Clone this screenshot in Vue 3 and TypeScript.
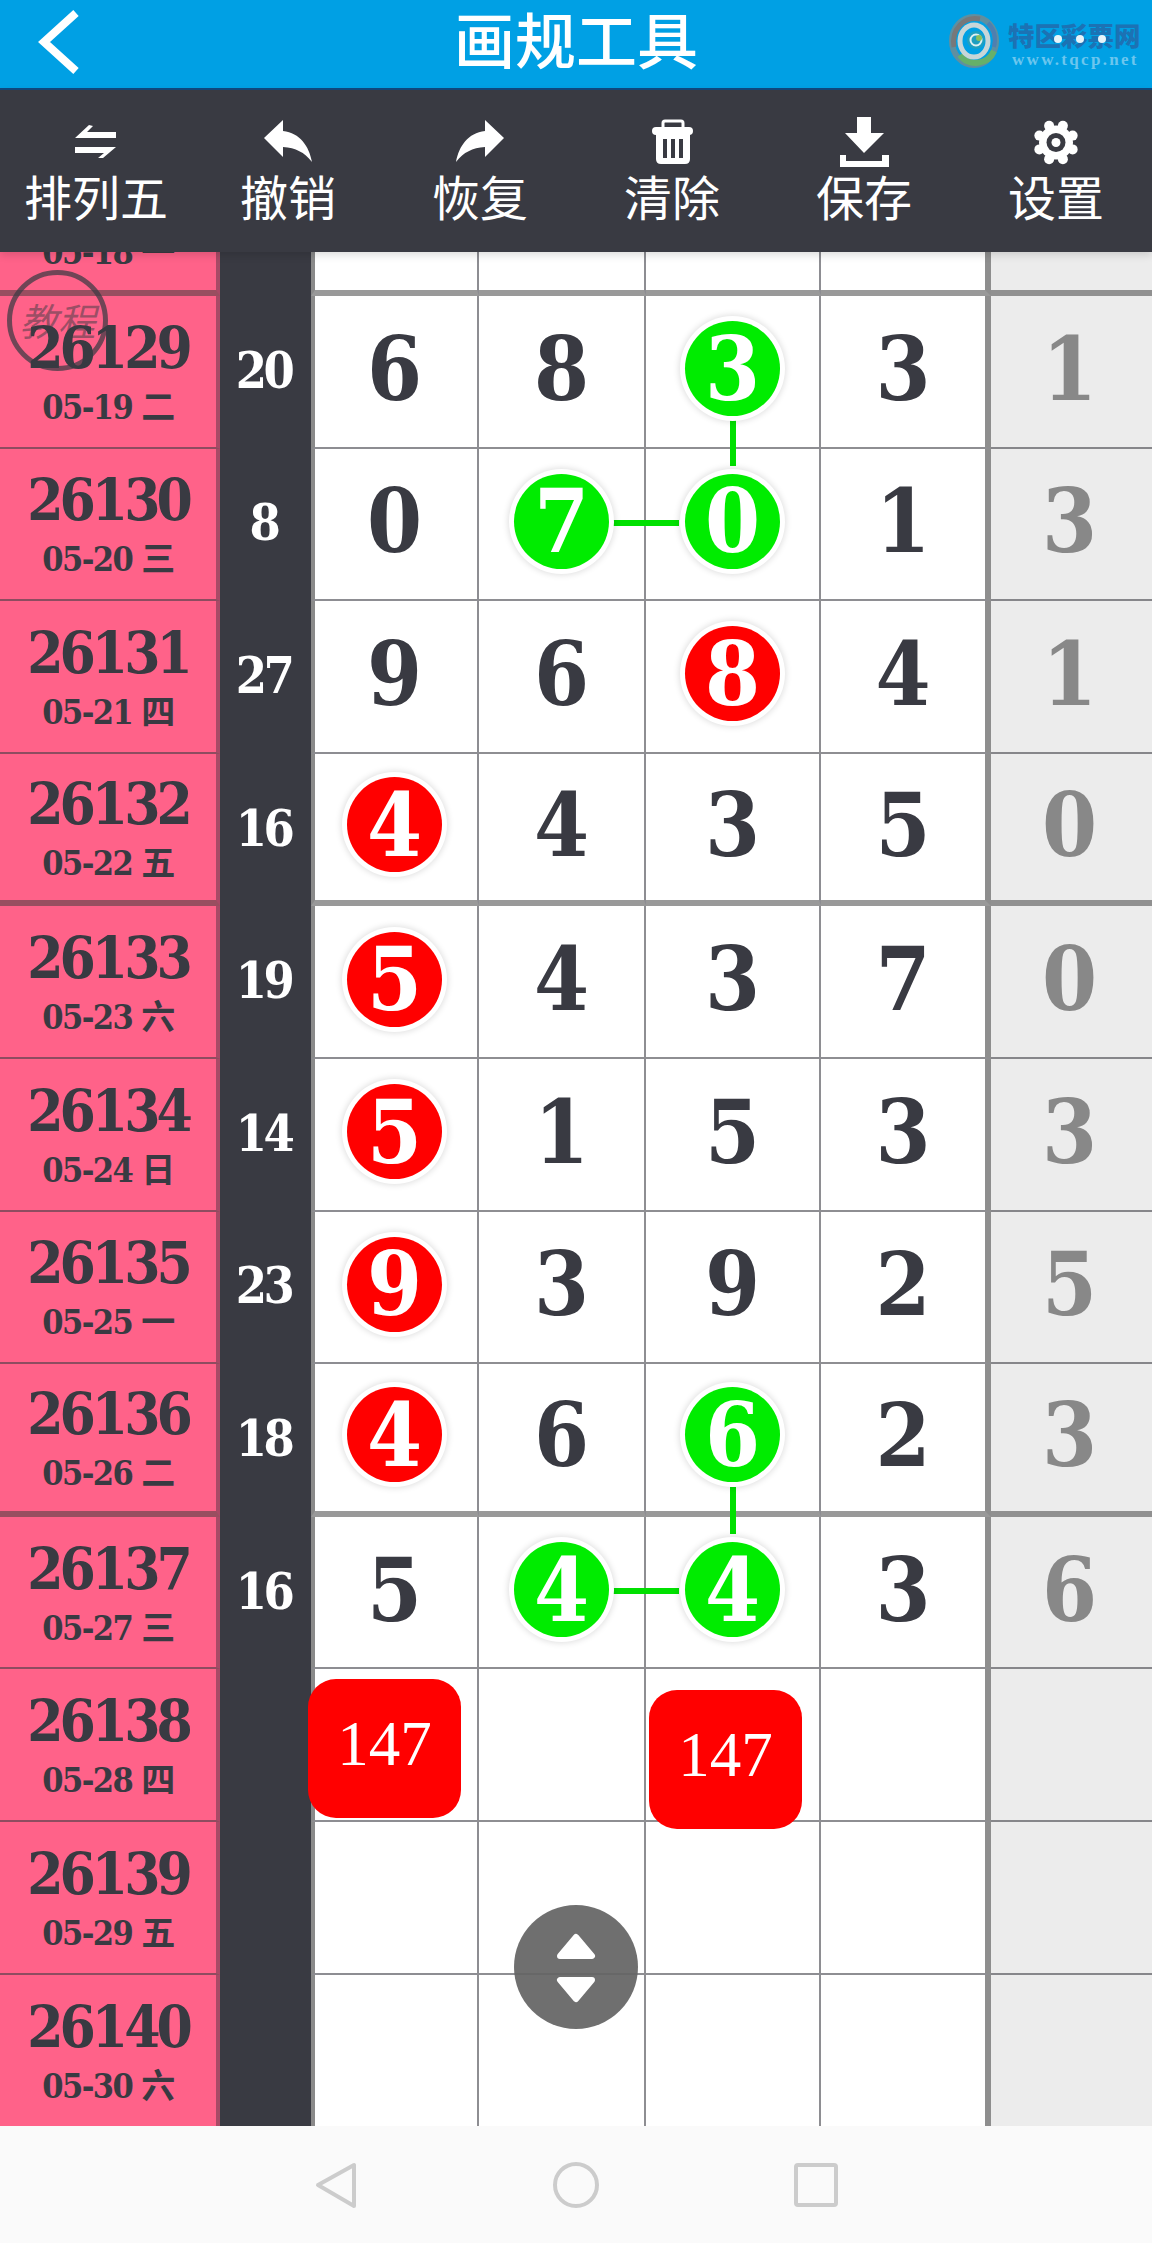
<script setup lang="ts">
type Ball = 'green' | 'red'

interface Cell {
  n: string
  ball?: Ball
  link?: boolean
}

interface Row {
  issue: number
  date: string
  sum: string
  cells: Cell[]
  tail: string
  thick: boolean
  last: boolean
}

const tools = ['排列五', '撤销', '恢复', '清除', '保存', '设置']

const gearTeeth = Array.from({ length: 8 }, (_, i) => {
  const a = (i * Math.PI) / 4 + Math.PI / 8
  return { x: 32 + 18 * Math.cos(a), y: 26.5 + 18 * Math.sin(a) }
})

// g = green ball, r = red ball, l = green ball joined to the ones above and left
function parseCells(src: string): Cell[] {
  if (!src) return [{ n: '' }, { n: '' }, { n: '' }, { n: '' }]
  return src.split(' ').map((s) => {
    const mark = s[1]
    return {
      n: s[0],
      ball: mark === 'r' ? 'red' : mark ? 'green' : undefined,
      link: mark === 'l',
    }
  })
}

const source: [string, string, string, string][] = [
  ['05-18 一', '', '', ''],
  ['05-19 二', '20', '6 8 3g 3', '1'],
  ['05-20 三', '8', '0 7g 0l 1', '3'],
  ['05-21 四', '27', '9 6 8r 4', '1'],
  ['05-22 五', '16', '4r 4 3 5', '0'],
  ['05-23 六', '19', '5r 4 3 7', '0'],
  ['05-24 日', '14', '5r 1 5 3', '3'],
  ['05-25 一', '23', '9r 3 9 2', '5'],
  ['05-26 二', '18', '4r 6 6g 2', '3'],
  ['05-27 三', '16', '5 4g 4l 3', '6'],
  ['05-28 四', '', '', ''],
  ['05-29 五', '', '', ''],
  ['05-30 六', '', '', ''],
]

const rows: Row[] = source.map(([date, sum, cells, tail], i) => ({
  issue: 26128 + i,
  date,
  sum,
  cells: parseCells(cells),
  tail,
  thick: i % 4 === 0 && i < 12,
  last: i === 12,
}))
</script>

<template>
  <div class="app">
    <header class="topbar">
      <svg class="back" width="90" height="80" viewBox="0 0 90 80">
        <polyline points="76,9 44,38 76,67" fill="none" stroke="#fff" stroke-width="8" />
      </svg>
      <h1 class="title">画规工具</h1>
      <div class="logo">
        <svg class="swirl" width="52" height="56" viewBox="0 0 52 56" fill="none">
          <ellipse cx="26" cy="28" rx="22" ry="24" stroke="#5f8fa0" stroke-width="6" />
          <path d="M6 34C3 16 16 3 32 6" stroke="#77787a" stroke-width="5" />
          <path d="M46 38C40 52 20 54 12 42" stroke="#66b06a" stroke-width="6" />
          <path d="M40 10C48 18 48 26 46 34" stroke="#4f7fb0" stroke-width="4" />
          <ellipse cx="26" cy="28" rx="14" ry="16" stroke="#c7d6d8" stroke-width="5" />
          <circle cx="28" cy="27" r="9" fill="#1f9fc0" />
          <circle cx="28" cy="27" r="5.5" stroke="#dff0f0" stroke-width="2" />
          <circle cx="31" cy="25" r="3" fill="#8bbf5a" />
        </svg>
        <div class="logo-text">
          <span class="logo-name">特区彩票网</span>
          <span class="logo-dots"><i /><i /><i /></span>
          <span class="logo-url">www.tqcp.net</span>
        </div>
      </div>
    </header>

    <nav class="toolbar">
      <div v-for="(label, i) in tools" :key="label" class="tool">
        <svg width="64" height="52" viewBox="0 0 64 52" fill="#fff">
          <g v-if="i === 0">
            <path d="M11 22L25 9L29 10L23 16H52V22Z" />
            <path d="M11 31H52L39 42H34L40 37H11Z" />
          </g>
          <path v-else-if="i === 1" d="M8 22L27 4V15C44 17 53 30 56 46C48 36 40 32 27 31V41Z" />
          <path v-else-if="i === 2" d="M56 22L37 4V15C20 17 11 30 8 46C16 36 24 32 37 31V41Z" />
          <g v-else-if="i === 3">
            <path d="M23 12V7Q23 5 25 5H41Q43 5 43 7V12" fill="none" stroke="#fff" stroke-width="3" />
            <rect x="12" y="11" width="41" height="8" rx="4" />
            <path d="M16 16H50V43Q50 48 45 48H21Q16 48 16 43Z" />
            <rect x="23" y="23" width="4" height="19" fill="#393a42" />
            <rect x="31" y="23" width="4" height="19" fill="#393a42" />
            <rect x="39" y="23" width="4" height="19" fill="#393a42" />
          </g>
          <g v-else-if="i === 4">
            <path d="M25 1H39V17H52L32 37L13 17H25Z" />
            <path d="M8 39H14V45H50V39H57V51H8Z" />
          </g>
          <g v-else>
            <circle v-for="(t, k) in gearTeeth" :key="k" :cx="t.x" :cy="t.y" r="5" />
            <circle cx="32" cy="26.5" r="17" />
            <circle cx="32" cy="26.5" r="9.5" fill="#393a42" />
            <circle cx="32" cy="26.5" r="4.5" />
          </g>
        </svg>
        <span class="tool-label">{{ label }}</span>
      </div>
    </nav>

    <main class="board">
      <div class="rows">
        <div v-for="row in rows" :key="row.issue" class="row" :class="{ thick: row.thick, last: row.last }">
          <div class="issue">
            <span class="issue-no">{{ row.issue }}</span>
            <span class="issue-date">{{ row.date }}</span>
          </div>
          <div class="sum">{{ row.sum }}</div>
          <div v-for="(cell, c) in row.cells" :key="c" class="cell">
            <span v-if="cell.ball" class="ball" :class="cell.ball">{{ cell.n }}</span>
            <template v-else>{{ cell.n }}</template>
            <template v-if="cell.link">
              <i class="link-up" />
              <i class="link-left" />
            </template>
            <span v-if="row.issue === 26138 && c === 0" class="tag tag-a">147</span>
            <span v-if="row.issue === 26138 && c === 2" class="tag tag-b">147</span>
          </div>
          <div class="tail">{{ row.tail }}</div>
        </div>
      </div>
    </main>

    <footer class="sysnav">
      <svg width="48" height="48" viewBox="0 0 48 48" fill="none" stroke="#ccc" stroke-width="4" stroke-linejoin="round">
        <polygon points="6,24 42,4 42,45" />
      </svg>
      <svg width="48" height="48" viewBox="0 0 48 48" fill="none" stroke="#ccc" stroke-width="4">
        <circle cx="24" cy="24" r="21" />
      </svg>
      <svg width="48" height="48" viewBox="0 0 48 48" fill="none" stroke="#ccc" stroke-width="4">
        <rect x="4" y="4" width="40" height="40" rx="2" />
      </svg>
    </footer>

    <div class="help"><span>教程</span></div>

    <button class="scroller" type="button">
      <svg width="124" height="124" viewBox="0 0 124 124" fill="#fff" stroke="#fff" stroke-width="6" stroke-linejoin="round">
        <polygon points="62,32 78,51 46,51" />
        <polygon points="46,75 78,75 62,94" />
      </svg>
    </button>
  </div>
</template>

<style scoped>
.app {
  position: relative;
  width: 1152px;
  height: 2243px;
  overflow: hidden;
  display: flex;
  flex-direction: column;
  background: #fff;
  font-family: "DejaVu Serif Condensed", "DejaVu Serif", "Noto Sans CJK SC", serif;
}

.topbar {
  flex: none;
  height: 90px;
  box-sizing: border-box;
  display: grid;
  grid-template-columns: 1fr auto 1fr;
  align-items: center;
  background: #00a0e4;
  border-bottom: 2px solid #10497f;
}

.back {
  display: block;
}

.title {
  margin: 0 0 12px;
  color: #fff;
  font: 500 61px/72px "Noto Sans CJK SC", sans-serif;
}

.logo {
  justify-self: end;
  display: flex;
  gap: 8px;
  padding-right: 10px;
  margin-bottom: 6px;
}

.swirl {
  display: block;
}

.logo-text {
  position: relative;
  display: flex;
  flex-direction: column;
  width: 134px;
}

.logo-name {
  padding-top: 6px;
  color: #1c72b4;
  font: 900 26.5px/32px "Noto Sans CJK SC", sans-serif;
  white-space: nowrap;
}

.logo-dots {
  position: absolute;
  top: 22px;
  left: 46px;
  display: flex;
  gap: 14px;
}

.logo-dots i {
  width: 8px;
  height: 8px;
  border-radius: 50%;
  background: #e8f4fa;
}

.logo-url {
  padding-left: 4px;
  color: #6cc6ee;
  font: 700 17px/18px "Liberation Serif", serif;
  letter-spacing: 2.3px;
  white-space: nowrap;
}

.toolbar {
  position: relative;
  z-index: 2;
  flex: none;
  height: 162px;
  box-sizing: border-box;
  padding-top: 26px;
  display: grid;
  grid-template-columns: repeat(6, 1fr);
  background: #393a42;
  box-shadow: 0 3px 8px rgba(0, 0, 0, 0.14);
}

.tool {
  display: flex;
  flex-direction: column;
  align-items: center;
  gap: 1px;
  color: #fff;
}

.tool-label {
  font: 400 48px/52px "Noto Sans CJK SC", sans-serif;
}

.board {
  flex: 1;
  min-height: 0;
  overflow: hidden;
}

.rows {
  margin-top: -108.6px;
}

.row {
  display: grid;
  grid-template-columns: 220px 91px 168px 167px 175px 170px 161px;
  height: 152.6px;
}

.row > div {
  box-sizing: border-box;
}

.issue,
.cell,
.tail {
  border-bottom: 2px solid rgba(60, 60, 68, 0.58);
}

.thick .issue,
.thick .cell,
.thick .tail {
  border-bottom-width: 6px;
  border-bottom-color: rgba(60, 60, 60, 0.52);
}

.last .issue,
.last .cell,
.last .tail {
  border-bottom: none;
}

.issue {
  display: flex;
  flex-direction: column;
  align-items: center;
  justify-content: center;
  padding-top: 3px;
  background: #ff6289;
  border-right: 4px solid #a84a66;
  color: #393a42;
  font-weight: 700;
}

.issue-no {
  font-size: 58px;
  line-height: 68px;
  letter-spacing: -4px;
}

.issue-date {
  font-size: 34px;
  line-height: 50px;
  letter-spacing: -1.6px;
  white-space: nowrap;
}

.sum {
  display: flex;
  align-items: center;
  justify-content: center;
  padding: 0 4px 4px 0;
  background: #393a42;
  color: #fff;
  font-size: 50px;
  font-weight: 700;
  letter-spacing: -3.5px;
}

.cell,
.tail {
  position: relative;
  display: flex;
  align-items: center;
  justify-content: center;
  padding-bottom: 5px;
  font-size: 88px;
  font-weight: 700;
  line-height: 1;
}

.cell {
  color: #393a42;
  border-right: 2px solid rgba(60, 60, 68, 0.58);
}

.cell:nth-child(3) {
  border-left: 4px solid #8a8a8a;
  padding-right: 3px;
}

.cell:nth-child(6) {
  border-right: 6px solid #8e8e8e;
}

.tail {
  background: #ececec;
  color: #888;
  padding-right: 4px;
}

.ball {
  position: relative;
  z-index: 1;
  width: 95px;
  height: 95px;
  border-radius: 50%;
  display: flex;
  align-items: center;
  justify-content: center;
  color: #fff;
  box-shadow: 0 0 0 5px #fff, 0 0 6px 6px rgba(0, 0, 0, 0.13);
}

.ball.green {
  background: #00ec00;
}

.ball.red {
  background: #f00;
}

.link-up,
.link-left {
  position: absolute;
  background: #00e000;
}

.link-up {
  top: -30px;
  left: calc(50% - 3px);
  width: 6px;
  height: 47px;
}

.link-left {
  top: 71px;
  left: -33px;
  width: 66px;
  height: 6px;
}

.tag {
  position: absolute;
  z-index: 1;
  width: 153px;
  height: 139px;
  box-sizing: border-box;
  padding-bottom: 8px;
  border-radius: 28px;
  display: flex;
  align-items: center;
  justify-content: center;
  background: #f00;
  color: #fff;
  font: 400 63px/1 "Liberation Serif", serif;
}

.tag-a {
  top: 9.6px;
  left: -7px;
}

.tag-b {
  top: 20.6px;
  left: 3px;
}

.sysnav {
  flex: none;
  height: 117px;
  display: flex;
  align-items: center;
  justify-content: center;
  gap: 192px;
  background: #fafafa;
}

.help {
  position: absolute;
  top: 270px;
  left: 7px;
  width: 101px;
  height: 101px;
  box-sizing: border-box;
  border: 5px solid rgba(57, 58, 66, 0.72);
  border-radius: 50%;
  display: flex;
  align-items: center;
  justify-content: center;
  color: rgba(57, 58, 66, 0.5);
  font: italic 400 38px/44px "Noto Sans CJK SC", sans-serif;
}

.help span {
  margin-bottom: 2px;
  white-space: nowrap;
}

.scroller {
  position: absolute;
  top: 1905px;
  left: 514px;
  width: 124px;
  height: 124px;
  padding: 0;
  border: none;
  border-radius: 50%;
  background: rgba(100, 100, 100, 0.93);
}

.scroller svg {
  display: block;
}
</style>
